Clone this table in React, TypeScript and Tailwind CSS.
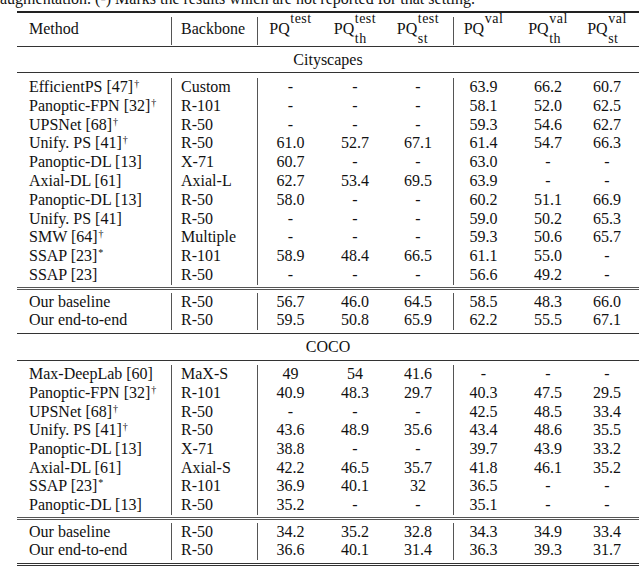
const cityRows = [
  ["EfficientPS [47]", "†", "Custom", "-", "-", "-", "63.9", "66.2", "60.7"],
  ["Panoptic-FPN [32]", "†", "R-101", "-", "-", "-", "58.1", "52.0", "62.5"],
  ["UPSNet [68]", "†", "R-50", "-", "-", "-", "59.3", "54.6", "62.7"],
  ["Unify. PS [41]", "†", "R-50", "61.0", "52.7", "67.1", "61.4", "54.7", "66.3"],
  ["Panoptic-DL [13]", "", "X-71", "60.7", "-", "-", "63.0", "-", "-"],
  ["Axial-DL [61]", "", "Axial-L", "62.7", "53.4", "69.5", "63.9", "-", "-"],
  ["Panoptic-DL [13]", "", "R-50", "58.0", "-", "-", "60.2", "51.1", "66.9"],
  ["Unify. PS [41]", "", "R-50", "-", "-", "-", "59.0", "50.2", "65.3"],
  ["SMW [64]", "†", "Multiple", "-", "-", "-", "59.3", "50.6", "65.7"],
  ["SSAP [23]", "*", "R-101", "58.9", "48.4", "66.5", "61.1", "55.0", "-"],
  ["SSAP [23]", "", "R-50", "-", "-", "-", "56.6", "49.2", "-"],
]

const cityOurs = [
  ["Our baseline", "", "R-50", "56.7", "46.0", "64.5", "58.5", "48.3", "66.0"],
  ["Our end-to-end", "", "R-50", "59.5", "50.8", "65.9", "62.2", "55.5", "67.1"],
]

const cocoRows = [
  ["Max-DeepLab [60]", "", "MaX-S", "49", "54", "41.6", "-", "-", "-"],
  ["Panoptic-FPN [32]", "†", "R-101", "40.9", "48.3", "29.7", "40.3", "47.5", "29.5"],
  ["UPSNet [68]", "†", "R-50", "-", "-", "-", "42.5", "48.5", "33.4"],
  ["Unify. PS [41]", "†", "R-50", "43.6", "48.9", "35.6", "43.4", "48.6", "35.5"],
  ["Panoptic-DL [13]", "", "X-71", "38.8", "-", "-", "39.7", "43.9", "33.2"],
  ["Axial-DL [61]", "", "Axial-S", "42.2", "46.5", "35.7", "41.8", "46.1", "35.2"],
  ["SSAP [23]", "*", "R-101", "36.9", "40.1", "32", "36.5", "-", "-"],
  ["Panoptic-DL [13]", "", "R-50", "35.2", "-", "-", "35.1", "-", "-"],
]

const cocoOurs = [
  ["Our baseline", "", "R-50", "34.2", "35.2", "32.8", "34.3", "34.9", "33.4"],
  ["Our end-to-end", "", "R-50", "36.6", "40.1", "31.4", "36.3", "39.3", "31.7"],
]

const cols = "grid grid-cols-[154px_86px_66px_64px_66px_60px_70px_56px]"

function Row({ r, tall }: { r: string[]; tall?: boolean }) {
  const h = tall ? "h-[18.8px] leading-[18.8px]" : "h-[18.7px] leading-[18.7px]"
  return (
    <div className={`${cols} ${h}`}>
      <div className="pl-[12px] whitespace-nowrap">
        {r[0]}
        {r[1] && <sup className="text-[10px] ml-[1px]">{r[1]}</sup>}
      </div>
      <div className="border-l border-[#555] pl-[9px]">{r[2]}</div>
      <div className="border-l border-[#555] text-center">{r[3]}</div>
      <div className="text-center">{r[4]}</div>
      <div className="text-center pr-[4px]">{r[5]}</div>
      <div className="border-l border-[#555] text-center">{r[6]}</div>
      <div className="text-center">{r[7]}</div>
      <div className="text-center pr-[8px]">{r[8]}</div>
    </div>
  )
}

function PQ({ sup, sub }: { sup: string; sub?: string }) {
  return (
    <>
      <span className="leading-[16px]">PQ</span>
      <span className="flex flex-col text-[14px] leading-[13px] tracking-[0.5px] -mt-[9px] ml-[0.5px]">
        <span>{sup}</span>
        {sub && <span className="mt-[7px]">{sub}</span>}
      </span>
    </>
  )
}

export default function App() {
  return (
    <div className="w-[640px] h-[567px] overflow-hidden bg-white text-[16px] text-[#111] font-['Liberation_Serif',serif]">
      <div className="h-[11px] overflow-hidden">
        <p className="-mt-[9px] leading-[16px] whitespace-nowrap">
          augmentation. (-) Marks the results which are not reported for that setting.
        </p>
      </div>

      <div className="ml-[17px] w-[622px] border-t-2 border-[#222]">
        {/* header */}
        <div className="py-[4px] border-b border-[#333]">
          <div className={`${cols} h-[25px]`}>
            <div className="pl-[12px] pt-[4px] leading-[16px]">Method</div>
            <div className="border-l border-[#555] pl-[9px] pt-[4px] leading-[16px]">Backbone</div>
            <div className="border-l border-[#555] flex justify-center items-start pt-[4px]">
              <PQ sup="test" />
            </div>
            <div className="flex justify-center items-start pt-[4px]">
              <PQ sup="test" sub="th" />
            </div>
            <div className="flex justify-center items-start pt-[4px] pr-[4px]">
              <PQ sup="test" sub="st" />
            </div>
            <div className="border-l border-[#555] flex justify-center items-start pt-[4px]">
              <PQ sup="val" />
            </div>
            <div className="flex justify-center items-start pt-[4px]">
              <PQ sup="val" sub="th" />
            </div>
            <div className="flex justify-center items-start pt-[4px] pr-[8px]">
              <PQ sup="val" sub="st" />
            </div>
          </div>
        </div>

        {/* cityscapes */}
        <div className="h-[26px] leading-[25px] text-center border-b border-[#333]">Cityscapes</div>
        <div className="pt-[5px] pb-[2px] border-b-[3px] border-double border-[#555]">
          {cityRows.map((r, i) => (
            <Row key={i} r={r} tall />
          ))}
        </div>
        <div className="pt-[3px] pb-[3px] border-b border-[#333]">
          {cityOurs.map((r, i) => (
            <Row key={i} r={r} />
          ))}
        </div>

        {/* coco */}
        <div className="h-[27px] leading-[26px] text-center border-b border-[#333]">COCO</div>
        <div className="pt-[4px] pb-[2px] border-b-[3px] border-double border-[#555]">
          {cocoRows.map((r, i) => (
            <Row key={i} r={r} />
          ))}
        </div>
        <div className="pt-[3px] pb-[3px] border-b-[3px] border-double border-[#333]">
          {cocoOurs.map((r, i) => (
            <Row key={i} r={r} />
          ))}
        </div>
      </div>
    </div>
  )
}
